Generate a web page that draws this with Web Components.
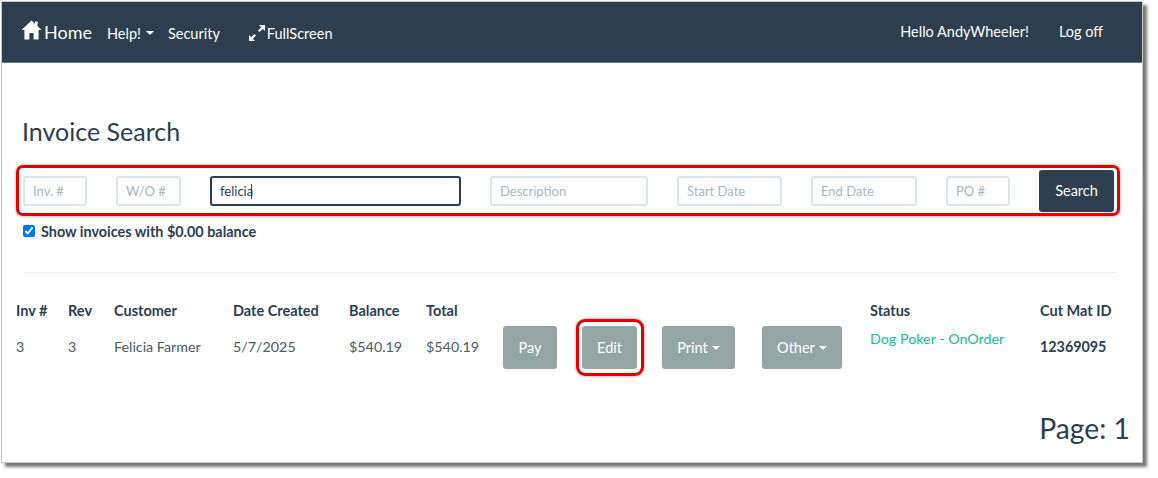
<!DOCTYPE html>
<html lang="en">
<head>
  <meta charset="UTF-8">
  <title>Invoice Search</title>
  <style>
    /* Global styles for the page */
    html, body { margin: 0; background: #fff; }
    body { font-family: Lato, "Open Sans", sans-serif; color: #2c3e50; height: 478px; overflow: hidden; }
  </style>
  <script>
    // Top navigation bar
    class AppNav extends HTMLElement {
      constructor() {
        super();
        this.attachShadow({ mode: 'open' });
        this.shadowRoot.innerHTML = `
          <style>
            :host { display: flex; align-items: center; height: 60px; background: #2c3e50; color: #fff; font-size: 14.5px; border-bottom: 1px solid #6b7885; }
            .home { display: flex; align-items: center; margin-left: 19px; font-size: 18px; gap: 2px; }
            .home svg { width: 21px; height: 20px; margin-top: -4px; }
            .help { margin: 2px 0 0 15px; display: flex; align-items: center; }
            .caret { width: 0; height: 0; margin-left: 5px; border: 4px solid transparent; border-top-color: #fff; border-bottom: 0; }
            .security { margin: 2px 0 0 14px; }
            .full { margin: 2px 0 0 28px; display: flex; align-items: center; gap: 1px; }
            .full svg { width: 18px; height: 18px; margin-top: -1px; }
            .right { margin-left: auto; display: flex; gap: 30px; margin-right: 39px; margin-top: -2px; }
          </style>
          <span class="home">
            <svg viewBox="0 0 21 20"><path fill="#fff" d="M10.5 0.5 L0.5 10 L3.4 10 L3.4 19.5 L8.4 19.5 L8.4 13 L12.6 13 L12.6 19.5 L17.6 19.5 L17.6 10 L20.5 10 L16.6 6.3 L16.6 1.5 L14 1.5 L14 3.8 Z"/></svg>
            Home
          </span>
          <span class="help">Help!<i class="caret"></i></span>
          <span class="security">Security</span>
          <span class="full">
            <svg viewBox="0 0 18 18"><path fill="#fff" d="M11 1 L17 1 L17 7 L14.8 4.9 L11.4 8 L10 6.6 L13.2 3.2 Z M1 17 L1 11 L3.2 13.1 L6.6 10 L8 11.4 L4.8 14.8 L7 17 Z"/></svg>
            FullScreen
          </span>
          <span class="right"><span>Hello AndyWheeler!</span><span>Log off</span></span>
        `;
      }
    }

    // Text field, placeholder or value comes in by attribute
    class SearchField extends HTMLElement {
      constructor() {
        super();
        this.attachShadow({ mode: 'open' });
        const focused = this.hasAttribute('focused');
        this.shadowRoot.innerHTML = `
          <style>
            :host { display: block; position: relative; height: 30px; }
            input { box-sizing: border-box; width: 100%; height: 100%; margin: 0; padding: 0 8px; border: 2px solid #dce4ec; border-radius: 3px; background: #fff; font: 13px Lato, sans-serif; color: #2c3e50; outline: none; }
            input::placeholder { color: #acb6c0; opacity: 1; }
            :host([focused]) input { border-color: #2c3e50; }
            .cursor { position: absolute; left: 41px; top: 8px; width: 1px; height: 15px; background: #2c3e50; }
          </style>
          <input placeholder="${this.getAttribute('placeholder') || ''}" value="${this.getAttribute('value') || ''}">
          ${focused ? '<span class="cursor"></span>' : ''}
        `;
      }
    }

    // Red highlighted search strip
    class SearchBar extends HTMLElement {
      constructor() {
        super();
        this.attachShadow({ mode: 'open' });
        this.shadowRoot.innerHTML = `
          <style>
            :host { display: grid; box-sizing: border-box; align-items: center; height: 51px; margin-left: 14px; width: 1104px;
              grid-template-columns: 64px 65px 251px 158px 105px 106px 64px 75px; column-gap: 29px;
              padding-left: 4px; border: 3px solid #e30000; border-radius: 7px; box-shadow: 0 0 3px rgba(0,0,0,.45); }
            button { box-sizing: border-box; height: 42px; border: 0; border-radius: 3px; background: #2c3e50; color: #fff; font: 14.5px Lato, sans-serif; }
          </style>
          <slot></slot>
          <button>Search</button>
        `;
      }
    }

    // Grey action button, optional caret
    class ActionButton extends HTMLElement {
      constructor() {
        super();
        this.attachShadow({ mode: 'open' });
        this.shadowRoot.innerHTML = `
          <style>
            :host { display: flex; box-sizing: border-box; align-items: center; justify-content: center; height: 43px; border-radius: 3px; background: #95a5a6; color: #fff; font-size: 14.5px; }
            :host([menu]) i { width: 0; height: 0; margin-left: 4px; border: 4px solid transparent; border-top-color: #fff; border-bottom: 0; }
          </style>
          <slot></slot>${this.hasAttribute('menu') ? '<i></i>' : ''}
        `;
      }
    }

    // Result table
    class InvoiceTable extends HTMLElement {
      constructor() {
        super();
        this.attachShadow({ mode: 'open' });
        this.shadowRoot.innerHTML = `
          <style>
            :host { display: grid; margin-left: 14px; font-size: 14.5px; color: #2c3e50;
              grid-template-columns: 52px 46px 119px 116px 77px 77px 54px 25px 55px 25px 73px 27px 80px 28px 170px auto;
              grid-template-rows: 29px 43px; align-items: center; }
            .th { grid-row: 1; font-weight: 700; margin-top: -3px; }
            .td { grid-row: 2; margin-top: -3px; color: #4d5a66; font-size: 14.3px; }
            .status { grid-row: 2; color: #18bc9c; align-self: start; margin-top: 4px; font-size: 14.3px; }
            .cut { grid-row: 2; font-weight: 700; margin-top: -3px; font-size: 14.3px; }
            action-button { grid-row: 2; }
            .pay { grid-column: 7; }
            .edit { grid-column: 9; position: relative; }
            .print { grid-column: 11; }
            .other { grid-column: 13; }
            .ring { grid-row: 2; grid-column: 9; margin: -7px -7px -7px -6px; height: 57px; box-sizing: border-box; border: 3px solid #e30000; border-radius: 9px; box-shadow: 0 0 3px rgba(0,0,0,.45); }
            .th15 { grid-column: 15; } .th16 { grid-column: 16; }
          </style>
          <span class="th">Inv #</span><span class="th">Rev</span><span class="th">Customer</span><span class="th">Date Created</span><span class="th">Balance</span><span class="th">Total</span>
          <span class="th th15">Status</span><span class="th th16">Cut Mat ID</span>
          <span class="td">3</span><span class="td">3</span><span class="td">Felicia Farmer</span><span class="td">5/7/2025</span><span class="td">$540.19</span><span class="td">$540.19</span>
          <action-button class="pay">Pay</action-button>
          <span class="ring"></span>
          <action-button class="edit">Edit</action-button>
          <action-button class="print" menu>Print</action-button>
          <action-button class="other" menu>Other</action-button>
          <span class="status th15">Dog Poker - OnOrder</span>
          <span class="cut th16">12369095</span>
        `;
      }
    }

    // Framed application window
    class AppWindow extends HTMLElement {
      constructor() {
        super();
        this.attachShadow({ mode: 'open' });
        this.shadowRoot.innerHTML = `
          <style>
            :host { display: block; box-sizing: border-box; width: 1142px; height: 462px; margin: 1px 0 0 1px; background: #fff; border: 1px solid #c9c9c9; box-shadow: 4px 4px 3px #777; }
            h1 { margin: 53px 0 0 20px; font-size: 25px; font-weight: 400; line-height: 30px; color: #2c3e50; }
            search-bar { margin-top: 19px; }
            .check { display: flex; align-items: center; gap: 6px; margin: 6px 0 0 21px; font-size: 14.4px; font-weight: 700; height: 18px; }
            .check input { margin: 0; width: 12px; height: 12px; accent-color: #0075ff; }
            hr { margin: 32px 25px 0 21px; border: 0; border-top: 1px solid #eee; }
            invoice-table { margin-top: 24px; }
            .page { text-align: right; margin: 41px 12px 0 0; font-size: 28.3px; line-height: 36px; }
          </style>
          <app-nav></app-nav>
          <h1>Invoice Search</h1>
          <search-bar>
            <search-field placeholder="Inv. #"></search-field>
            <search-field placeholder="W/O #"></search-field>
            <search-field value="felicia" focused></search-field>
            <search-field placeholder="Description"></search-field>
            <search-field placeholder="Start Date"></search-field>
            <search-field placeholder="End Date"></search-field>
            <search-field placeholder="PO #"></search-field>
          </search-bar>
          <label class="check"><input type="checkbox" checked>Show invoices with $0.00 balance</label>
          <hr>
          <invoice-table></invoice-table>
          <div class="page">Page: 1</div>
        `;
      }
    }

    // Register the custom elements
    customElements.define('app-nav', AppNav);
    customElements.define('search-field', SearchField);
    customElements.define('search-bar', SearchBar);
    customElements.define('action-button', ActionButton);
    customElements.define('invoice-table', InvoiceTable);
    customElements.define('app-window', AppWindow);
  </script>
</head>
<body>
  <app-window></app-window>
</body>
</html>
